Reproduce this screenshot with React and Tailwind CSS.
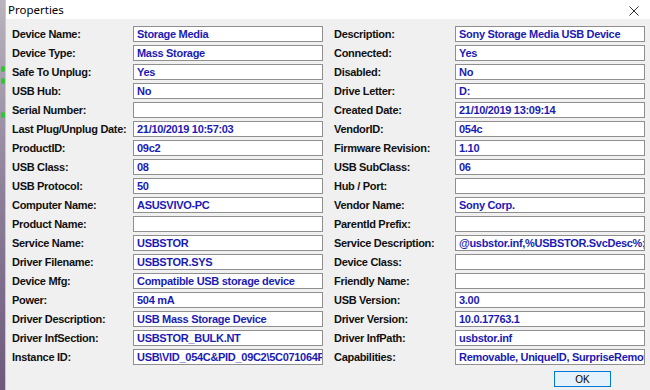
import React from "react";

const left = [
  ["Device Name:", "Storage Media"],
  ["Device Type:", "Mass Storage"],
  ["Safe To Unplug:", "Yes"],
  ["USB Hub:", "No"],
  ["Serial Number:", ""],
  ["Last Plug/Unplug Date:", "21/10/2019 10:57:03"],
  ["ProductID:", "09c2"],
  ["USB Class:", "08"],
  ["USB Protocol:", "50"],
  ["Computer Name:", "ASUSVIVO-PC"],
  ["Product Name:", ""],
  ["Service Name:", "USBSTOR"],
  ["Driver Filename:", "USBSTOR.SYS"],
  ["Device Mfg:", "Compatible USB storage device"],
  ["Power:", "504 mA"],
  ["Driver Description:", "USB Mass Storage Device"],
  ["Driver InfSection:", "USBSTOR_BULK.NT"],
  ["Instance ID:", "USB\\VID_054C&PID_09C2\\5C071064F0D3"],
];

const right = [
  ["Description:", "Sony Storage Media USB Device"],
  ["Connected:", "Yes"],
  ["Disabled:", "No"],
  ["Drive Letter:", "D:"],
  ["Created Date:", "21/10/2019 13:09:14"],
  ["VendorID:", "054c"],
  ["Firmware Revision:", "1.10"],
  ["USB SubClass:", "06"],
  ["Hub / Port:", ""],
  ["Vendor Name:", "Sony Corp."],
  ["ParentId Prefix:", ""],
  ["Service Description:", "@usbstor.inf,%USBSTOR.SvcDesc%;USB Mass Storage"],
  ["Device Class:", ""],
  ["Friendly Name:", ""],
  ["USB Version:", "3.00"],
  ["Driver Version:", "10.0.17763.1"],
  ["Driver InfPath:", "usbstor.inf"],
  ["Capabilities:", "Removable, UniqueID, SurpriseRemovalOK"],
];

function Field({ label, value, second }) {
  return (
    <>
      <div className={"flex items-center text-[11px] font-bold tracking-[-0.3px] text-[#111] whitespace-nowrap " + (second ? "pl-[11px]" : "")}>
        {label}
      </div>
      <div className="flex items-center h-[16px] border border-[#8f8f8f] bg-white pl-[3px] overflow-hidden whitespace-nowrap text-[11px] font-bold tracking-[-0.3px] text-[#1b1bb4]">
        {value}
      </div>
    </>
  );
}

export default function App() {
  return (
    <div className="w-[650px] h-[390px] flex overflow-hidden bg-[#f0f0f0]" style={{ fontFamily: '"Liberation Sans", Arial, sans-serif' }}>
      {/* window behind the dialog */}
      <div className="w-[5px] h-full flex flex-col items-center bg-gradient-to-b from-[#b9b4bd] via-[#8d7f99] to-[#6d5a7d]">
        <div className="h-[66px]" />
        <div className="w-[4px] h-[6px] rounded-full bg-[#2ec82e]" />
        <div className="h-[6px]" />
        <div className="w-[4px] h-[6px] rounded-full bg-[#2ec82e]" />
        <div className="h-[28px]" />
        <div className="w-[4px] h-[6px] rounded-full bg-[#2ec82e]" />
      </div>

      <div className="flex-1 flex flex-col border-l border-[#c8c8c8]">
        <div className="h-[19px] bg-white flex items-center justify-between pl-[2px] pr-[11px]">
          <span className="text-[11.5px] text-black" style={{ fontFamily: '"Noto Sans", "Open Sans", sans-serif' }}>Properties</span>
          <svg width="10" height="10" viewBox="0 0 10 10" className="mt-[2px]">
            <path d="M0.5 0.5 L9.5 9.5 M9.5 0.5 L0.5 9.5" stroke="#333" strokeWidth="1" />
          </svg>
        </div>

        <div className="pl-[6px] pt-[7px]">
          <div className="grid grid-cols-[121px_190px_132px_190px] auto-rows-[16px] gap-y-[3px]">
            {left.map((l, i) => (
              <React.Fragment key={i}>
                <Field label={l[0]} value={l[1]} />
                <Field label={right[i][0]} value={right[i][1]} second />
              </React.Fragment>
            ))}
          </div>
        </div>

        <div className="flex justify-end pr-[39px] pt-[6px]">
          <button className="w-[57px] h-[16px] border border-[#0078d7] bg-[#e5f1fb] text-[10px] text-black flex items-center justify-center">
            OK
          </button>
        </div>
      </div>
    </div>
  );
}
